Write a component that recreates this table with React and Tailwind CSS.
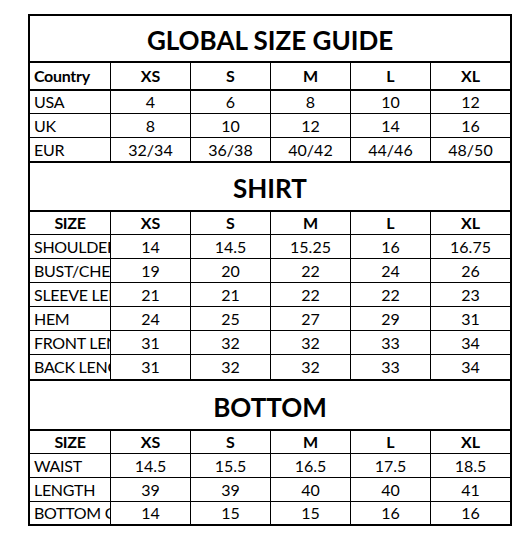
import React from 'react';

const sizes = ['XS', 'S', 'M', 'L', 'XL'];

const globalRows = [
  { label: 'USA', values: ['4', '6', '8', '10', '12'], h: 'h-[23px] border-b' },
  { label: 'UK', values: ['8', '10', '12', '14', '16'], h: 'h-[24px] border-b' },
  { label: 'EUR', values: ['32/34', '36/38', '40/42', '44/46', '48/50'], h: 'h-[25px] border-b-2' },
];

const shirtRows = [
  { label: 'SHOULDER', values: ['14', '14.5', '15.25', '16', '16.75'], h: 'h-[24px] border-b' },
  { label: 'BUST/CHEST', values: ['19', '20', '22', '24', '26'], h: 'h-[24px] border-b' },
  { label: 'SLEEVE LENGTH', values: ['21', '21', '22', '22', '23'], h: 'h-[24px] border-b' },
  { label: 'HEM', values: ['24', '25', '27', '29', '31'], h: 'h-[24px] border-b' },
  { label: 'FRONT LENGTH', values: ['31', '32', '32', '33', '34'], h: 'h-[24px] border-b' },
  { label: 'BACK LENGTH', values: ['31', '32', '32', '33', '34'], h: 'h-[26px] border-b-2' },
];

const bottomRows = [
  { label: 'WAIST', values: ['14.5', '15.5', '16.5', '17.5', '18.5'], h: 'h-[24px] border-b' },
  { label: 'LENGTH', values: ['39', '39', '40', '40', '41'], h: 'h-[24px] border-b' },
  { label: 'BOTTOM OPENING', values: ['14', '15', '15', '16', '16'], h: 'h-[22px]' },
];

const Title = ({ text, h }) => (
  <div className={`${h} border-b-2 border-black flex items-center justify-center`}>
    <span className="text-[26px] font-bold leading-none pt-[3px]">{text}</span>
  </div>
);

const Row = ({ label, values, h, bold, labelCenter }) => (
  <div className={`${h} border-black flex`}>
    <div
      className={`w-[80px] shrink-0 overflow-hidden whitespace-nowrap flex items-center tracking-[-0.3px] ${
        labelCenter ? 'justify-center' : 'pl-1'
      }`}
    >
      {label}
    </div>
    {values.map((v, i) => (
      <div
        key={i}
        className={`w-[80px] shrink-0 border-l border-black flex items-center justify-center ${
          bold ? 'font-bold' : ''
        }`}
      >
        {v}
      </div>
    ))}
  </div>
);

const App = () => {
  return (
    <div
      className="w-[532px] h-[553px] bg-white pt-[14px] text-black text-[16px] leading-none"
      style={{ fontFamily: 'Lato, "Liberation Sans", sans-serif' }}
    >
      <div className="ml-[28px] w-[484px] border-2 border-black">
        <Title text="GLOBAL SIZE GUIDE" h="h-[47px]" />
        <Row label={<b>Country</b>} values={sizes} h="h-[28px] border-b-2" bold />
        {globalRows.map((r) => (
          <Row key={r.label} {...r} />
        ))}

        <Title text="SHIRT" h="h-[49px]" />
        <Row label={<b>SIZE</b>} values={sizes} h="h-[23px] border-b" bold labelCenter />
        {shirtRows.map((r) => (
          <Row key={r.label} {...r} />
        ))}

        <Title text="BOTTOM" h="h-[50px]" />
        <Row label={<b>SIZE</b>} values={sizes} h="h-[23px] border-b" bold labelCenter />
        {bottomRows.map((r) => (
          <Row key={r.label} {...r} />
        ))}
      </div>
    </div>
  );
};

export default App;
